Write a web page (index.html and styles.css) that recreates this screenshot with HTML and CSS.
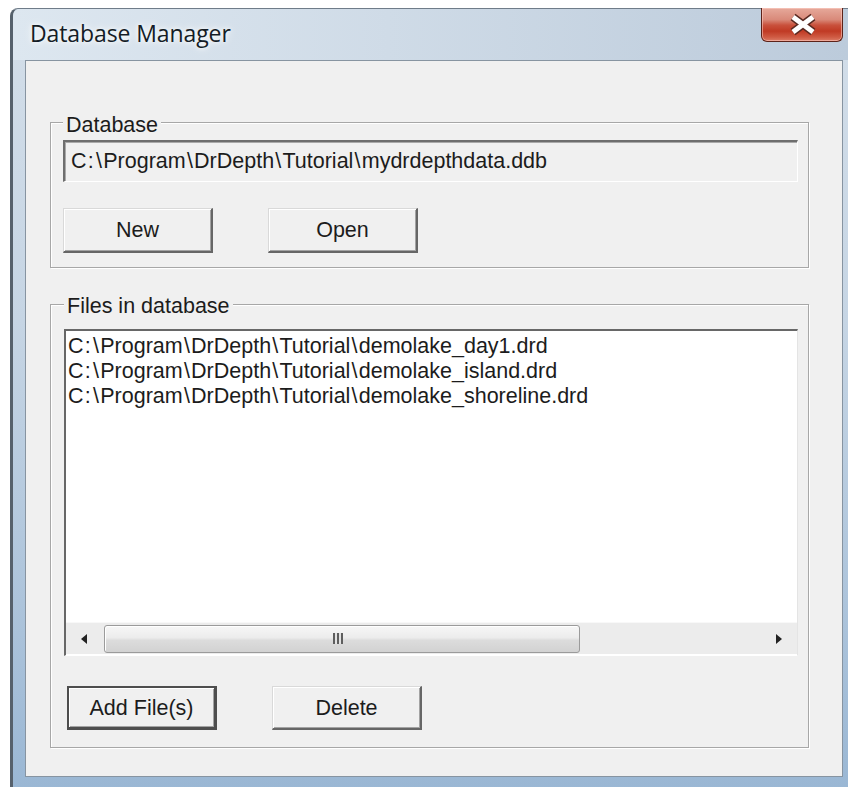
FILE: index.html
```html
<!DOCTYPE html>
<html lang="en">
<head>
<meta charset="utf-8">
<title>Database Manager</title>
<link rel="stylesheet" href="styles.css">
</head>
<body>
<div class="window">
  <div class="titlebar">
    <span class="title">Database Manager</span>
    <div class="close" title="Close">
      <svg width="82" height="33" viewBox="0 0 82 33">
        <path class="x-outline" d="M31 9 L51 24 M51 9 L31 24"/>
        <path class="x-fill" d="M31 9 L51 24 M51 9 L31 24"/>
      </svg>
    </div>
  </div>

  <div class="client">
    <div class="group group-db">
      <div class="legend">Database</div>
      <div class="edit">C<span class="sep">:</span><span class="sep">\</span>Program<span class="sep">\</span>DrDepth<span class="sep">\</span>Tutorial<span class="sep">\</span>mydrdepthdata.ddb</div>
      <div class="button-row">
        <button class="btn">New</button>
        <button class="btn">Open</button>
      </div>
    </div>

    <div class="group group-files">
      <div class="legend">Files in database</div>
      <div class="listbox">
        <ul class="items">
          <li>C<span class="sep">:</span><span class="sep">\</span>Program<span class="sep">\</span>DrDepth<span class="sep">\</span>Tutorial<span class="sep">\</span>demolake_day1.drd</li>
          <li>C<span class="sep">:</span><span class="sep">\</span>Program<span class="sep">\</span>DrDepth<span class="sep">\</span>Tutorial<span class="sep">\</span>demolake_island.drd</li>
          <li>C<span class="sep">:</span><span class="sep">\</span>Program<span class="sep">\</span>DrDepth<span class="sep">\</span>Tutorial<span class="sep">\</span>demolake_shoreline.drd</li>
        </ul>
        <div class="hscroll">
          <div class="arrow">
            <svg width="6" height="10" viewBox="0 0 6 10"><polygon points="6,0 6,10 0,5"/></svg>
          </div>
          <div class="track">
            <div class="thumb"><span class="grip"></span></div>
          </div>
          <div class="arrow">
            <svg width="6" height="10" viewBox="0 0 6 10"><polygon points="0,0 0,10 6,5"/></svg>
          </div>
        </div>
      </div>
      <div class="button-row button-row-files">
        <button class="btn btn-default">Add File(s)</button>
        <button class="btn">Delete</button>
      </div>
    </div>
  </div>
</div>
</body>
</html>
```

FILE: styles.css
```css
* {
  box-sizing: border-box;
}

html, body {
  margin: 0;
  padding: 0;
  background: #ffffff;
  overflow: hidden;
  width: 848px;
  height: 787px;
}

/* Window frame (Aero basic look) */
.window {
  margin: 8px 0 0 10px;
  width: 838px;
  height: 782px;
  border-left: 3px solid #56616c;
  border-top: 1px solid #6f7c89;
  border-radius: 8px 0 0 0;
  background:
    linear-gradient(to bottom, #d3dee9 0%, #c6d5e4 40%, #aac2da 80%, #9ab7d4 100%);
  display: flex;
  flex-direction: column;
}

.titlebar {
  height: 51px;
  display: flex;
  align-items: flex-start;
  padding-left: 17px;
  background: linear-gradient(to right, #dde7f0 0%, #cfdbe7 45%, #bccbdb 100%);
  border-radius: 7px 0 0 0;
}

.title {
  font-family: "Open Sans", "Noto Sans", sans-serif;
  font-size: 23px;
  line-height: 28px;
  margin-top: 10px;
  color: #141c26;
  text-shadow: 0 0 10px #ffffff, 0 0 4px #ffffff;
  letter-spacing: -0.1px;
}

.close {
  margin-left: auto;
  margin-right: 5px;
  margin-top: -1px;
  width: 82px;
  height: 34px;
  border: 1px solid #5c2219;
  border-top: none;
  border-radius: 0 0 6px 6px;
  background: linear-gradient(to bottom,
    #e6a99b 0%, #d98a7a 35%, #c9513c 52%, #c03a24 70%, #cf5a43 88%, #dc7c66 100%);
  box-shadow: inset 0 0 0 1px rgba(255, 210, 200, 0.55);
  overflow: hidden;
}

.close svg {
  display: block;
}

.x-outline {
  fill: none;
  stroke: #5a2a22;
  stroke-width: 8;
}

.x-fill {
  fill: none;
  stroke: #ffffff;
  stroke-width: 5;
}

/* Client area */
.client {
  margin-left: 12px;
  width: 818px;
  height: 717px;
  border: 1px solid #8794a1;
  background: #f0f0f0;
  padding: 61px 33px 0 24px;
  font-family: "Liberation Sans", Arial, sans-serif;
  font-size: 21.5px;
  color: #1c1c1c;
}

/* Path separators are set a little wider, as in the dialog font */
.sep {
  padding: 0 1.2px;
}

/* Group boxes */
.group {
  border: 1px solid #a7a7a7;
  box-shadow: inset 1px 1px 0 #ffffff, 1px 1px 0 #ffffff;
  padding: 0 10px 14px 12px;
}

.group-files {
  margin-top: 36px;
  padding-left: 13px;
  padding-bottom: 17px;
}

.legend {
  width: fit-content;
  margin-top: -10px;
  height: 24px;
  line-height: 24px;
  padding: 0 3px;
  background: #f0f0f0;
  white-space: nowrap;
}

.group-files .legend {
  margin-top: -11px;
}

/* Read-only edit field */
.edit {
  margin-top: 3px;
  height: 42px;
  border-top: 2px solid #6e6e6e;
  border-left: 2px solid #6e6e6e;
  border-right: 1px solid #ffffff;
  border-bottom: 1px solid #ffffff;
  box-shadow: inset 1px 1px 0 #a9a9a9;
  background: #f0f0f0;
  padding-left: 6px;
  line-height: 39px;
  white-space: nowrap;
}

/* Push buttons */
.button-row {
  margin-top: 26px;
  display: flex;
  gap: 55px;
}

.button-row-files {
  margin-top: 30px;
  margin-left: 3px;
}

.btn {
  width: 150px;
  height: 45px;
  margin: 0;
  padding: 0;
  font: inherit;
  color: #1c1c1c;
  background: #f0f0f0;
  border-top: 1px solid #d9d9d9;
  border-left: 1px solid #d9d9d9;
  border-right: 2px solid #666666;
  border-bottom: 2px solid #666666;
  box-shadow: inset 1px 1px 0 #ffffff, inset -1px -1px 0 #a3a3a3;
  line-height: 40px;
  text-align: center;
}

.button-row-files .btn {
  height: 44px;
}

.btn-default {
  border: 2px solid #4e4e4e;
  border-right-width: 3px;
  border-bottom-width: 3px;
  box-shadow: inset 1px 1px 0 #ffffff, inset -1px -1px 0 #a3a3a3;
}

/* List box with horizontal scroll bar */
.listbox {
  margin-top: 11px;
  height: 327px;
  border-top: 2px solid #676767;
  border-left: 2px solid #676767;
  border-right: 1px solid #e4e4e4;
  border-bottom: 1px solid #ffffff;
  background: #ffffff;
  display: flex;
  flex-direction: column;
}

.items {
  flex: 1;
  list-style: none;
  margin: 0;
  padding: 3px 0 0 2px;
}

.items li {
  height: 25px;
  line-height: 25px;
  white-space: nowrap;
}

.hscroll {
  height: 32px;
  margin-bottom: 1px;
  background: #ececec;
  border-top: 1px solid #f8f8f8;
  display: flex;
  align-items: center;
}

.arrow {
  width: 36px;
  height: 100%;
  display: flex;
  align-items: center;
  justify-content: center;
}

.arrow svg polygon {
  fill: #222222;
}

.track {
  flex: 1;
  height: 100%;
  display: flex;
  align-items: center;
  padding-left: 2px;
}

.thumb {
  width: 476px;
  height: 28px;
  border: 1px solid #9b9b9b;
  border-radius: 3px;
  background: linear-gradient(to bottom, #f7f7f7 0%, #ececec 45%, #dcdcdc 55%, #d2d2d2 100%);
  box-shadow: inset 1px 1px 0 #ffffff;
  display: flex;
  align-items: center;
  justify-content: center;
}

.grip {
  width: 10px;
  height: 11px;
  margin-left: -8px;
  background: repeating-linear-gradient(to right,
    #5e5e5e 0, #5e5e5e 2px, #e2e2e2 2px, #e2e2e2 4px);
}
```
